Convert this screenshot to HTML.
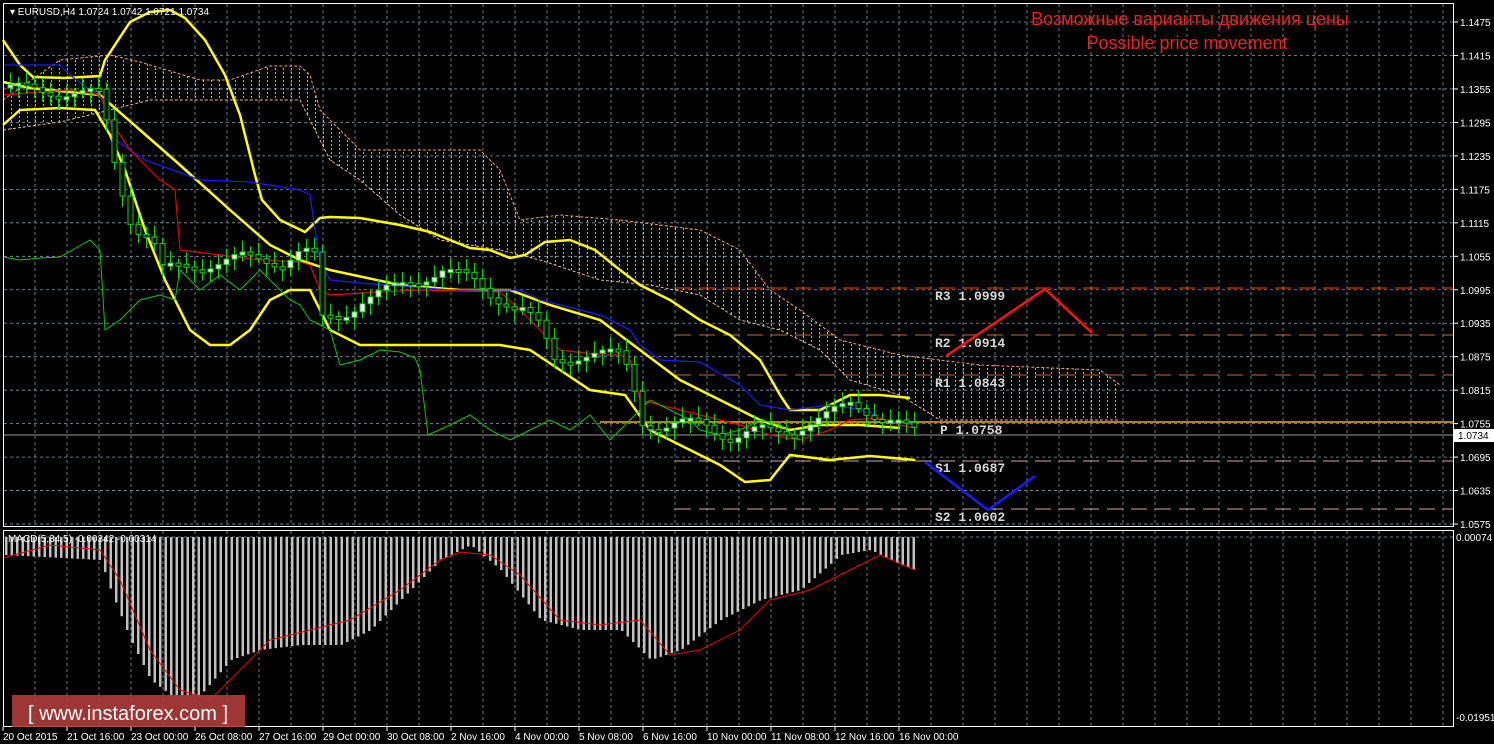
<!DOCTYPE html>
<html><head><meta charset="utf-8"><style>
html,body{margin:0;padding:0;background:#000;width:1494px;height:744px;overflow:hidden}
svg{display:block}
text{font-family:"Liberation Sans",sans-serif}
text.mono{font-family:"Liberation Mono",monospace;font-weight:bold}
</style></head><body>
<svg id="s" width="1494" height="744" xmlns="http://www.w3.org/2000/svg">
<defs>
<pattern id="dots" width="8" height="4" patternUnits="userSpaceOnUse">
<rect x="3" y="0" width="1" height="2" fill="#ddd"/>
</pattern>
</defs>
<rect width="1494" height="744" fill="#000"/>
<g id="grid"></g>
<path d="M3,100 L60,60 L110,55 L140,62 L200,80 L230,80 L270,66 L300,66 L310,75 L320,110 L340,130 L360,150 L480,150 L500,170 L520,220 L560,215 L620,220 L700,230 L740,250 L770,290 L800,310 L840,340 L900,355 L980,365 L1100,370 L1120,385 L1120,420 L940,420 L900,395 L850,380 L820,350 L780,330 L740,320 L700,295 L650,285 L600,280 L540,260 L500,250 L440,240 L400,215 L360,180 L330,160 L320,140 L300,100 L150,100 L110,110 L60,122 L3,130 Z" fill="url(#dots)" opacity="0.8"/>
<path d="M3,100 L60,60 L110,55 L140,62 L200,80 L230,80 L270,66 L300,66 L310,75 L320,110 L340,130 L360,150 L480,150 L500,170 L520,220 L560,215 L620,220 L700,230 L740,250 L770,290 L800,310 L840,340 L900,355 L980,365 L1100,370 L1120,385" fill="none" stroke="#f4a460" stroke-width="1" stroke-dasharray="3,2"/>
<path d="M3,130 L60,122 L110,110 L150,100 L300,100 L320,140 L330,160 L360,180 L400,215 L440,240 L500,250 L540,260 L600,280 L650,285 L700,295 L740,320 L780,330 L820,350 L850,380 L900,395 L940,420 L1120,420" fill="none" stroke="#e6b8a0" stroke-width="1" stroke-dasharray="3,2"/>
<line x1="675" y1="288" x2="1454" y2="288" stroke="#ff4500" stroke-dasharray="16,8"/>
<line x1="675" y1="335" x2="1454" y2="335" stroke="#ff7f3f" stroke-dasharray="16,8" opacity=".8"/>
<line x1="675" y1="375" x2="1454" y2="375" stroke="#ff7f3f" stroke-dasharray="16,8" opacity=".8"/>
<line x1="675" y1="461" x2="1454" y2="461" stroke="#c8a8a8" stroke-dasharray="16,8"/>
<line x1="675" y1="509" x2="1454" y2="509" stroke="#c8a8a8" stroke-dasharray="16,8"/>
<line x1="600" y1="422" x2="1454" y2="422" stroke="#f0b000" stroke-width="1.5"/>
<line x1="3" y1="435" x2="1454" y2="435" stroke="#999"/>
<g fill="none" stroke="#ffff00" stroke-width="2.5">
<polyline points="3,40 20,65 33,77 65,78 100,76 105,60 130,22 150,12 170,10 185,18 205,40 225,75 240,115 255,175 262,200 280,220 305,232 320,218 330,217 360,218 400,225 430,232 450,240 470,248 490,250 510,258 525,255 545,242 570,240 595,250 620,270 640,285 670,300 700,320 730,335 760,360 780,395 790,410 820,410 850,395 880,395 910,398"/>
<polyline points="3,82 30,88 100,95 140,130 180,165 230,210 270,245 300,260 330,270 400,285 460,290 510,290 550,305 600,320 640,350 680,380 720,400 760,420 790,430 820,425 860,425 900,428"/>
<polyline points="3,125 20,110 60,108 95,110 110,135 125,170 145,230 165,280 190,330 210,345 230,345 250,330 270,300 290,290 310,290 330,330 360,345 500,345 530,350 560,370 590,390 625,395 650,430 690,450 720,465 745,482 770,480 790,455 830,460 870,456 915,460"/>
</g>
<polyline fill="none" stroke="#1a1aff" stroke-width="1.2" points="3,65 60,65 70,75 90,90 105,100 115,140 130,150 145,160 200,180 250,182 300,190 310,195 320,262 330,280 360,283 450,290 520,290 540,300 600,315 630,330 640,345 660,360 700,362 740,385 760,405 790,410 830,405 850,408 870,412 880,420 915,425"/>
<polyline fill="none" stroke="#ee0000" stroke-width="1.2" points="3,95 40,92 70,90 100,95 110,120 130,150 160,180 175,190 180,250 220,255 260,260 300,262 310,265 320,290 330,295 380,292 420,290 500,292 520,310 540,330 560,350 600,355 620,355 630,360 640,400 660,405 700,415 740,425 770,435 800,440 830,430 850,420 880,418 900,425 915,428"/>
<polyline fill="none" stroke="#00cc00" stroke-width="1" points="3,257 20,260 40,258 60,257 90,240 100,250 105,330 120,320 140,300 160,295 175,300 180,270 200,290 220,275 240,290 260,270 270,280 290,300 300,305 310,320 330,330 340,365 360,360 380,350 400,352 415,358 420,370 428,435 450,425 470,415 490,430 510,440 530,430 550,420 560,425 570,430 590,415 610,440 630,420 650,400 670,410 690,420 700,430 720,435 740,430 760,420 780,425 800,440"/>
<g id="candles"></g>
<g font-size="13" fill="#d8d8d8">
<text class="mono" x="935" y="300">R3 1.0999</text>
<text class="mono" x="935" y="347">R2 1.0914</text>
<text class="mono" x="935" y="387">R1 1.0843</text>
<text class="mono" x="940" y="434">P 1.0758</text>
<text class="mono" x="935" y="472">S1 1.0687</text>
<text class="mono" x="935" y="521">S2 1.0602</text>
</g>
<polyline fill="none" stroke="#ff1010" stroke-width="2.5" points="946,356 1045,289 1092,333"/>
<polyline fill="none" stroke="#1a1aff" stroke-width="2.5" points="925,462 988,510 1035,476"/>
<text x="1190" y="25" fill="#ee2020" font-size="18" text-anchor="middle">Возможные варианты движения цены</text>
<text x="1187" y="49" fill="#ee2020" font-size="18" text-anchor="middle">Possible price movement</text>
<g id="macd"></g>
<polyline fill="none" stroke="#ee0000" stroke-width="1" points="3,558 50,545 100,550 120,580 150,650 180,690 210,700 240,670 270,640 310,630 350,620 400,590 440,560 460,552 490,555 520,575 560,620 600,625 640,620 670,655 700,650 740,630 770,600 810,590 850,570 880,555 915,570"/>
<rect x="3.5" y="3.5" width="1450" height="523" fill="none" stroke="#fff"/>
<rect x="3.5" y="530.5" width="1450" height="196" fill="none" stroke="#fff"/>
<g id="axis" font-size="10" fill="#fff"></g>
<rect x="1454" y="429" width="40" height="13" fill="#fff"/>
<text x="1458" y="439" font-size="10" fill="#000">1.0734</text>
<text x="1456" y="541" font-size="10" fill="#fff">0.00074</text>
<text x="1456" y="721" font-size="10" fill="#fff">-0.01951</text>
<text x="10" y="15" font-size="10" fill="#fff">▾ EURUSD,H4  1.0724 1.0742 1.0721 1.0734</text>
<text x="8" y="542" font-size="10" fill="#fff">MACD(5,34,5) -0.00342 -0.00314</text>
<rect x="12" y="695" width="233" height="32" fill="#b03c3c" opacity=".9"/>
<text x="28" y="720" font-size="20" fill="#fff">[ www.instaforex.com ]</text>
</svg>
<script>
(function(){
var g=document.getElementById('grid'),h='';
for(var x=35;x<1454;x+=32)h+='<line x1="'+x+'" y1="4" x2="'+x+'" y2="526" stroke="#8899aa" stroke-dasharray="3,3" stroke-width="0.8"/><line x1="'+x+'" y1="531" x2="'+x+'" y2="726" stroke="#8899aa" stroke-dasharray="3,3" stroke-width="0.8"/>';
var ax='';
for(var i=0;i<16;i++){var y=22+i*33.47,p=(1.1475-i*0.006).toFixed(4);h+='<line x1="4" y1="'+y+'" x2="1453" y2="'+y+'" stroke="#8899aa" stroke-dasharray="3,3" stroke-width="0.8"/>';ax+='<line x1="1454" y1="'+y+'" x2="1458" y2="'+y+'" stroke="#fff"/><text x="1460" y="'+(y+4)+'">'+p+'</text>';}
h+='<line x1="4" y1="537" x2="1453" y2="537" stroke="#8899aa" stroke-dasharray="3,3" stroke-width="0.8"/>';
g.innerHTML=h;
var t=["20 Oct 2015","21 Oct 16:00","23 Oct 00:00","26 Oct 08:00","27 Oct 16:00","29 Oct 00:00","30 Oct 08:00","2 Nov 16:00","4 Nov 00:00","5 Nov 08:00","6 Nov 16:00","10 Nov 00:00","11 Nov 08:00","12 Nov 16:00","16 Nov 00:00"];
for(var i=0;i<t.length;i++){var x=3+i*64;ax+='<line x1="'+x+'" y1="727" x2="'+x+'" y2="731" stroke="#fff"/><text x="'+x+'" y="740">'+t[i]+'</text>';}
document.getElementById('axis').innerHTML=ax;
function interp(pts,x){for(var i=0;i<pts.length-1;i++){if(x>=pts[i][0]&&x<=pts[i+1][0]){var f=(x-pts[i][0])/(pts[i+1][0]-pts[i][0]);return pts[i][1]+f*(pts[i+1][1]-pts[i][1]);}}return pts[pts.length-1][1];}
var mid=[[3,88],[100,95],[105,130],[115,175],[130,225],[150,240],[160,270],[200,265],[240,258],[280,262],[300,250],[315,260],[320,320],[340,315],[360,300],[400,285],[440,270],[470,280],[490,295],[520,310],[540,330],[550,360],[580,355],[620,355],[630,380],[640,420],[660,430],[700,420],[730,440],[760,430],[790,430],[820,420],[850,400],[880,420],[915,432]];
var c='',prev=88;
for(var x=8;x<=915;x+=8){var v=interp(mid,x)+Math.sin(x*0.7)*6;var o=prev,cl=v,tp=Math.min(o,cl),bt=Math.max(o,cl);if(bt-tp<3)bt=tp+3;
var w1=tp-4-Math.abs(Math.sin(x))*8,w2=bt+4+Math.abs(Math.cos(x))*8;
c+='<line x1="'+(x+2.5)+'" y1="'+w1+'" x2="'+(x+2.5)+'" y2="'+w2+'" stroke="#00dd00"/><rect x="'+x+'" y="'+tp+'" width="5" height="'+(bt-tp)+'" fill="'+(cl<o?'#fff':'#000')+'" stroke="#00dd00"/>';prev=v;}
document.getElementById('candles').innerHTML=c;
var mb=[[3,555],[100,560],[110,590],[130,640],[150,680],[170,695],[200,695],[230,660],[260,650],[300,645],[340,645],[370,630],[400,600],[440,560],[470,545],[500,570],[540,620],[580,630],[620,630],[650,660],[680,650],[720,620],[760,600],[800,590],[840,555],[870,550],[900,565],[915,570]];
var m='';for(var x=5;x<=915;x+=5.5){m+='<rect x="'+x+'" y="537" width="2.5" height="'+(interp(mb,x)-537)+'" fill="#c0c0c0"/>';}
document.getElementById('macd').innerHTML=m;
})();
</script>
</body></html>
